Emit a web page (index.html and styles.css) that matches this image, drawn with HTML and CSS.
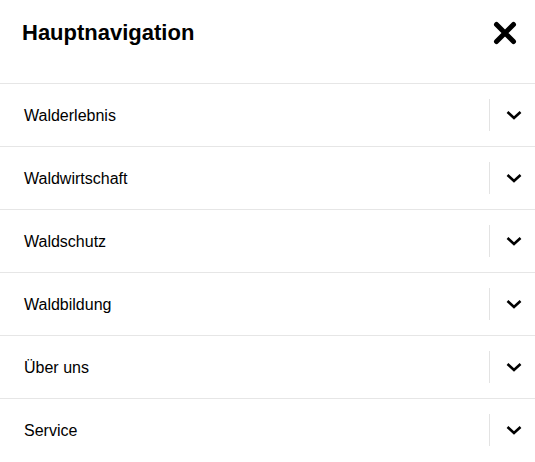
FILE: index.html
```html
<!DOCTYPE html>
<html lang="de">
<head>
<meta charset="utf-8">
<title>Hauptnavigation</title>
<link rel="stylesheet" href="styles.css">
</head>
<body>
<nav class="menu">
  <div class="menu-head">
    <h2 class="menu-title">Hauptnavigation</h2>
    <button class="close" aria-label="Schließen">
      <svg width="24" height="24" viewBox="0 0 24 24"><path d="M3.5 3.5 L20.5 20.5 M20.5 3.5 L3.5 20.5" stroke="#000" stroke-width="5" stroke-linecap="round" fill="none"/></svg>
    </button>
  </div>
  <ul class="items">
    <li class="item"><span class="label">Walderlebnis</span><span class="sep"></span><button class="toggle"><svg width="16" height="10" viewBox="0 0 16 10"><path d="M1.5 2 L8 8 L14.5 2" stroke="#000" stroke-width="2.6" fill="none"/></svg></button></li>
    <li class="item"><span class="label">Waldwirtschaft</span><span class="sep"></span><button class="toggle"><svg width="16" height="10" viewBox="0 0 16 10"><path d="M1.5 2 L8 8 L14.5 2" stroke="#000" stroke-width="2.6" fill="none"/></svg></button></li>
    <li class="item"><span class="label">Waldschutz</span><span class="sep"></span><button class="toggle"><svg width="16" height="10" viewBox="0 0 16 10"><path d="M1.5 2 L8 8 L14.5 2" stroke="#000" stroke-width="2.6" fill="none"/></svg></button></li>
    <li class="item"><span class="label">Waldbildung</span><span class="sep"></span><button class="toggle"><svg width="16" height="10" viewBox="0 0 16 10"><path d="M1.5 2 L8 8 L14.5 2" stroke="#000" stroke-width="2.6" fill="none"/></svg></button></li>
    <li class="item"><span class="label">Über uns</span><span class="sep"></span><button class="toggle"><svg width="16" height="10" viewBox="0 0 16 10"><path d="M1.5 2 L8 8 L14.5 2" stroke="#000" stroke-width="2.6" fill="none"/></svg></button></li>
    <li class="item"><span class="label">Service</span><span class="sep"></span><button class="toggle"><svg width="16" height="10" viewBox="0 0 16 10"><path d="M1.5 2 L8 8 L14.5 2" stroke="#000" stroke-width="2.6" fill="none"/></svg></button></li>
  </ul>
</nav>
</body>
</html>
```
FILE: styles.css
```css
html, body {
  margin: 0;
  padding: 0;
  background: #fff;
  font-family: "Liberation Sans", Arial, sans-serif;
  color: #000;
}
.menu {
  width: 535px;
}
.menu-head {
  height: 66px;
  padding: 0 18px 17px 22px;
  display: flex;
  align-items: center;
  justify-content: space-between;
  border-bottom: 1px solid #e6e6e6;
}
.menu-title {
  margin: 0;
  font-size: 22px;
  font-weight: bold;
}
.close {
  border: 0;
  background: none;
  padding: 0;
  width: 24px;
  height: 24px;
  display: flex;
  align-items: center;
  justify-content: center;
}
.items {
  list-style: none;
  margin: 0;
  padding: 0;
}
.item {
  height: 62px;
  display: flex;
  align-items: center;
  border-bottom: 1px solid #e6e6e6;
}
.item:last-child {
  border-bottom: 0;
}
.label {
  flex: 1;
  padding-left: 24px;
  padding-top: 2px;
  font-size: 16px;
}
.sep {
  width: 1px;
  height: 32px;
  background: #e3e3e3;
}
.toggle {
  width: 45px;
  height: 32px;
  border: 0;
  background: none;
  padding: 0 0 0 2px;
  display: flex;
  align-items: center;
  justify-content: center;
}
```
